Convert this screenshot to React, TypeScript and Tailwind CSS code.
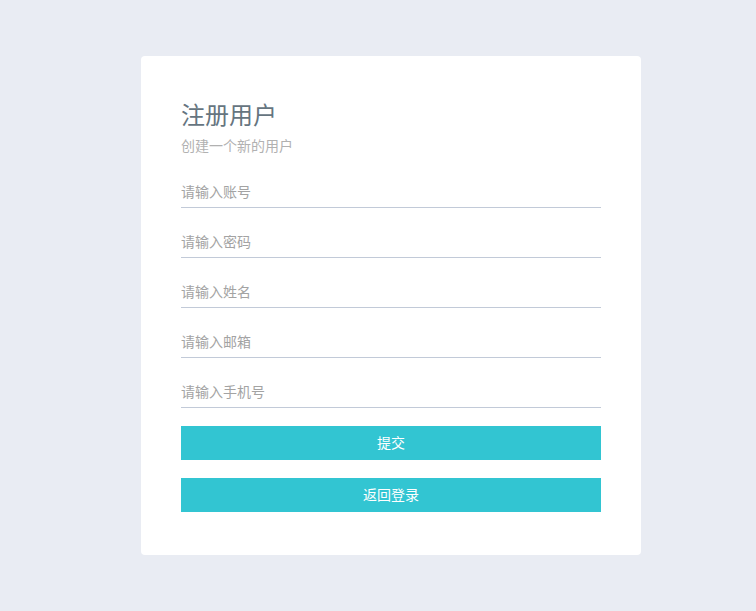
import React from 'react'

const fields = ['请输入账号', '请输入密码', '请输入姓名', '请输入邮箱', '请输入手机号']

export default function App() {
  return (
    <div
      className="min-h-[611px] w-full bg-[#e9ecf3] pl-[141px] pt-[56px]"
      style={{ fontFamily: '"Liberation Sans", "Noto Sans CJK SC", sans-serif' }}
    >
      <div className="w-[500px] h-[499px] rounded-[4px] bg-white px-[40px] pt-[42px]">
        {/* Header */}
        <h1 className="text-[24px] leading-[36px] font-normal text-[#66757f]">注册用户</h1>
        <p className="mt-[2px] text-[14px] leading-[20px] text-[#b1b1b1]">创建一个新的用户</p>

        {/* Fields */}
        <div className="mt-[22px] flex flex-col gap-[20px]">
          {fields.map((f) => (
            <input
              key={f}
              placeholder={f}
              className="h-[30px] w-full border-b border-[#c2cad8] bg-transparent pb-[2px] text-[14px] text-[#555] outline-none placeholder:text-[#a3a3a3]"
            />
          ))}
        </div>

        {/* Actions */}
        <div className="mt-[18px] flex flex-col gap-[18px]">
          <button className="h-[34px] w-full bg-[#32c5d2] text-[14px] text-white">提交</button>
          <button className="h-[34px] w-full bg-[#32c5d2] text-[14px] text-white">返回登录</button>
        </div>
      </div>
    </div>
  )
}
